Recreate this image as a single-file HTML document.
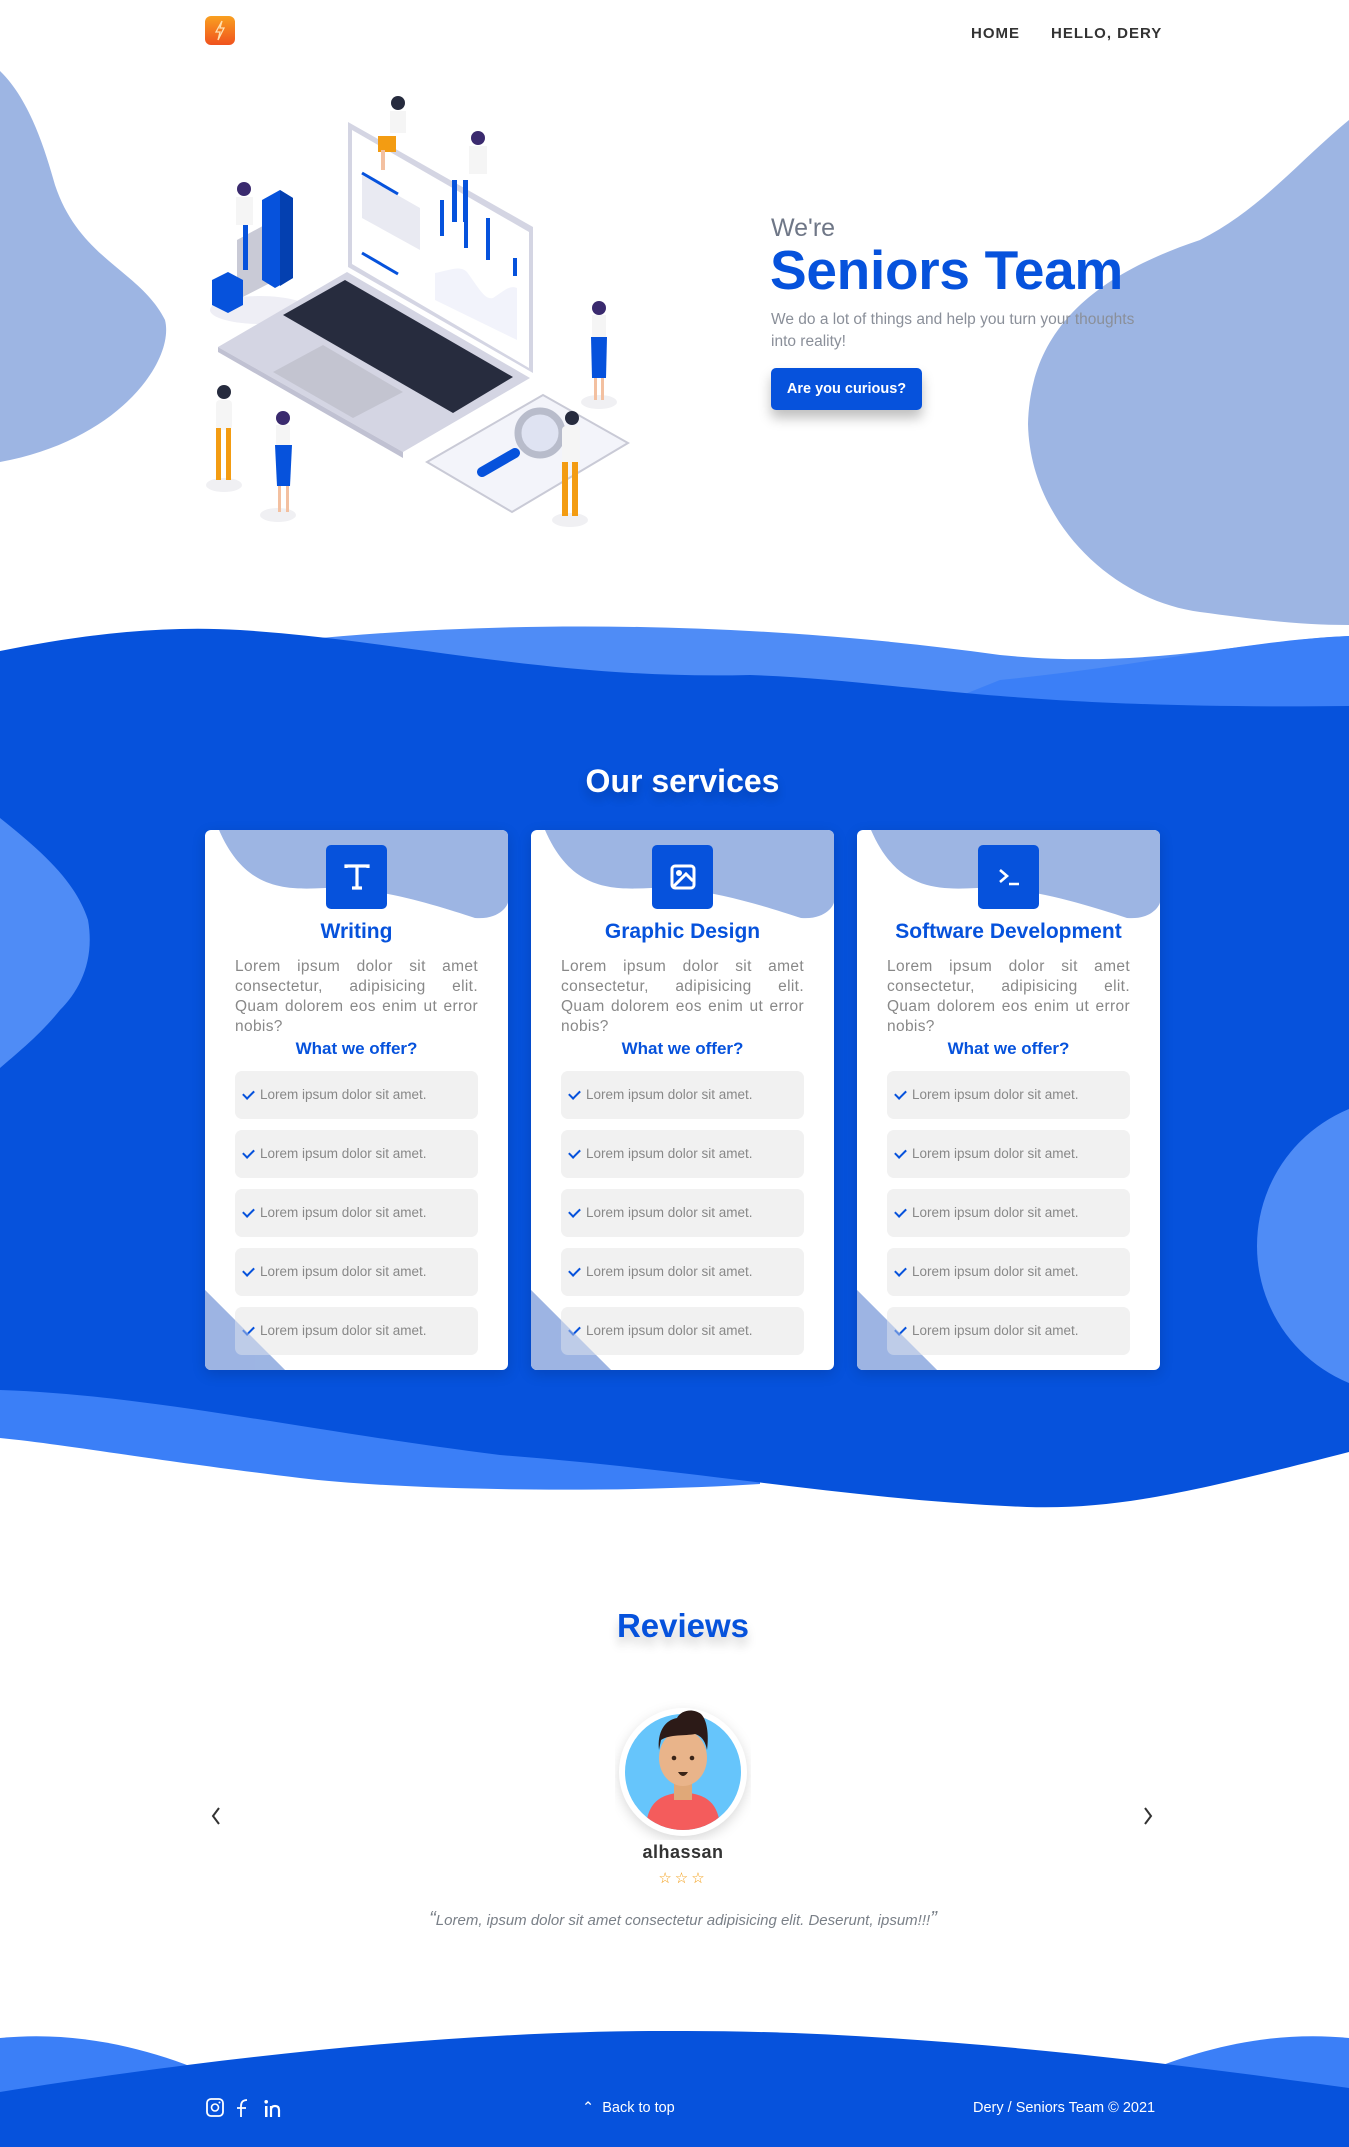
<!DOCTYPE html>
<html><head><meta charset="utf-8">
<style>
*{margin:0;padding:0;box-sizing:border-box}
body{width:1349px;height:2147px;position:relative;overflow:hidden;background:#fff;font-family:"Liberation Sans",sans-serif}
.abs{position:absolute}
.nav{top:25px;font-size:15px;font-weight:bold;color:#333;letter-spacing:1px}
.card{position:absolute;top:830px;width:303px;height:540px;background:#fff;border-radius:6px;overflow:hidden;box-shadow:0 4px 14px rgba(0,0,0,.15)}
.card svg.deco{position:absolute;left:0;top:0}
.ic{position:absolute;left:121px;top:15px;width:61px;height:64px;background:#0652dc;border-radius:5px;display:flex;align-items:center;justify-content:center}
.ct{position:absolute;top:90px;width:100%;text-align:center;color:#0652dc;font-weight:bold;font-size:21px}
.cp{position:absolute;left:30px;top:127px;width:243px;font-size:15.5px;letter-spacing:.35px;line-height:20px;color:#888;text-align:justify}
.co{position:absolute;top:209px;width:100%;text-align:center;color:#0652dc;font-weight:bold;font-size:17px}
.li{position:absolute;left:30px;width:243px;height:48px;background:#f1f1f1;border-radius:7px;font-size:13.5px;color:#888;line-height:48px;padding-left:25px}
.li:before{content:"";position:absolute;left:8px;top:19px;width:9px;height:5px;border-left:2px solid #0652dc;border-bottom:2px solid #0652dc;transform:rotate(-45deg)}
.tri{position:absolute;left:0;bottom:0}
</style></head><body>
<svg class="abs" style="left:0;top:0" width="1349" height="2147" viewBox="0 0 1349 2147">
<path d="M0 71 C30 100 45 150 55 185 C80 260 140 270 165 320 C175 360 120 440 0 462 Z" fill="#9db5e3"/>
<path d="M1349 120 C1300 160 1260 210 1200 240 C1080 280 1030 340 1028 424 C1030 520 1110 600 1200 612 C1260 620 1300 625 1349 625 Z" fill="#9db5e3"/>
<path d="M300 640 C500 620 750 620 1000 655 C1150 670 1250 640 1349 636 L1349 720 L600 720 Z" fill="#4f8cf6"/>
<path d="M1000 680 C1150 665 1250 640 1349 636 L1349 720 L900 720 Z" fill="#3b7ff7"/>
<path d="M0 1380 L760 1380 L760 1484 C600 1494 400 1490 300 1478 C150 1460 70 1445 0 1438 Z" fill="#3b7ff7"/>
<path d="M0 651 C80 635 160 625 240 630 C400 640 550 680 750 675 C900 680 1000 710 1349 706 L1349 1452 C1200 1490 1120 1510 1027 1507 C850 1500 700 1470 500 1455 C300 1430 150 1395 0 1390 Z" fill="#0652dc"/>
<path d="M0 818 C40 850 75 880 88 920 C95 960 80 990 60 1010 C40 1035 15 1055 0 1068 Z" fill="#4f8cf6"/>
<circle cx="1405" cy="1246" r="148" fill="#4f8cf6"/>
<path d="M0 2038 C80 2030 150 2050 200 2070 L0 2100 Z" fill="#3b7ff7"/>
<path d="M1349 2038 C1270 2030 1200 2050 1150 2070 L1349 2100 Z" fill="#3b7ff7"/>
<path d="M0 2092 C200 2060 450 2030 675 2031 C900 2030 1150 2060 1349 2088 L1349 2147 L0 2147 Z" fill="#0652dc"/>
</svg>

<div class="abs" style="left:205px;top:16px;width:30px;height:29px;border-radius:6px;background:linear-gradient(180deg,#f9a020,#f0521e)"></div>
<svg class="abs" style="left:205px;top:16px" width="30" height="29"><path d="M17 5 L11 16 L15 16 L13 24 L19 12 L15 12 Z" fill="none" stroke="#ffe0b0" stroke-width="1.3"/></svg>
<div class="abs nav" style="left:971px">HOME</div>
<div class="abs nav" style="left:1051px">HELLO, DERY</div>

<svg class="abs" style="left:0;top:0" width="700" height="560">
<ellipse cx="260" cy="310" rx="50" ry="14" fill="#eeeef5"/>
<polygon points="237,240 270,222 270,283 237,300" fill="#c9cad6"/>
<polygon points="262,200 280,190 293,198 293,278 275,288 262,280" fill="#0652dc"/>
<polygon points="280,190 293,198 293,278 280,286" fill="#0440b0"/>
<polygon points="212,280 228,272 243,280 243,305 228,313 212,305" fill="#0652dc"/>
<polygon points="218,347 347,272 530,378 403,452" fill="#d4d5e3"/>
<polygon points="218,347 403,452 403,458 218,352" fill="#c0c1d2"/>
<polygon points="348,122 533,227 533,373 348,267" fill="#d4d5e3"/>
<polygon points="352,130 529,232 529,368 352,264" fill="#fff"/>
<polygon points="283,315 345,280 513,377 453,413" fill="#272c3e"/>
<polygon points="273,372 323,345 403,392 353,418" fill="#c3c4d0"/>
<polygon points="362,175 420,208 420,250 362,218" fill="#e9eaf2"/>
<line x1="362" y1="173" x2="398" y2="194" stroke="#0652dc" stroke-width="3"/>
<line x1="362" y1="253" x2="398" y2="274" stroke="#0652dc" stroke-width="3"/>
<line x1="442" y1="200" x2="442" y2="236" stroke="#0652dc" stroke-width="4"/>
<line x1="466" y1="220" x2="466" y2="248" stroke="#0652dc" stroke-width="4"/>
<line x1="488" y1="218" x2="488" y2="260" stroke="#0652dc" stroke-width="4"/>
<line x1="515" y1="258" x2="515" y2="276" stroke="#0652dc" stroke-width="4"/>
<path d="M435 273 C450 270 460 265 467 272 C480 290 485 300 493 298 C505 290 510 285 517 288 L517 340 L435 300 Z" fill="#f2f3fb"/>
<polygon points="427,462 543,395 628,443 512,512" fill="#f3f4fa" stroke="#c9cad6" stroke-width="2"/>
<circle cx="540" cy="433" r="22" fill="#dfe3f2" stroke="#b8bccb" stroke-width="7"/>
<line x1="482" y1="472" x2="515" y2="453" stroke="#0652dc" stroke-width="10" stroke-linecap="round"/>
<g fill="#f0f0f3"><ellipse cx="224" cy="485" rx="18" ry="7"/><ellipse cx="278" cy="515" rx="18" ry="7"/><ellipse cx="599" cy="402" rx="18" ry="7"/><ellipse cx="570" cy="520" rx="18" ry="7"/></g>
<g><circle cx="224" cy="392" r="7" fill="#262b3e"/><rect x="216" y="400" width="16" height="30" rx="4" fill="#f5f5f5"/><rect x="216" y="428" width="5" height="52" fill="#f39c12"/><rect x="226" y="428" width="5" height="52" fill="#f39c12"/></g>
<g><circle cx="283" cy="418" r="7" fill="#3a2a6e"/><rect x="276" y="425" width="14" height="20" fill="#f5f5f5"/><path d="M275 445 L292 445 L290 486 L277 486 Z" fill="#0652dc"/><rect x="278" y="486" width="3" height="26" fill="#f3c0a0"/><rect x="286" y="486" width="3" height="26" fill="#f3c0a0"/></g>
<g><circle cx="599" cy="308" r="7" fill="#3a2a6e"/><rect x="592" y="315" width="14" height="22" fill="#f5f5f5"/><path d="M591 337 L607 337 L606 378 L592 378 Z" fill="#0652dc"/><rect x="594" y="378" width="3" height="22" fill="#f3c0a0"/><rect x="601" y="378" width="3" height="22" fill="#f3c0a0"/></g>
<g><circle cx="572" cy="418" r="7" fill="#262b3e"/><rect x="562" y="426" width="18" height="40" rx="4" fill="#f5f5f5"/><rect x="562" y="462" width="6" height="54" fill="#f39c12"/><rect x="572" y="462" width="6" height="54" fill="#f39c12"/></g>
<g><circle cx="398" cy="103" r="7" fill="#262b3e"/><rect x="390" y="111" width="16" height="22" fill="#f5f5f5"/><rect x="378" y="136" width="18" height="16" fill="#f39c12"/><rect x="381" y="150" width="4" height="20" fill="#f3c0a0"/></g>
<g><circle cx="478" cy="138" r="7" fill="#3a2a6e"/><rect x="469" y="146" width="18" height="28" fill="#f5f5f5"/><rect x="452" y="180" width="5" height="42" fill="#0652dc"/><rect x="463" y="180" width="5" height="42" fill="#0652dc"/></g>
<g><circle cx="244" cy="189" r="7" fill="#3a2a6e"/><rect x="236" y="197" width="17" height="28" fill="#f5f5f5"/><rect x="243" y="225" width="5" height="45" fill="#0652dc"/></g>
</svg>

<div class="abs" style="left:771px;top:214px;font-size:25px;color:#6f7787">We're</div>
<div class="abs" style="left:770px;top:238px;font-size:55px;font-weight:bold;color:#0652dc;letter-spacing:-0.3px">Seniors Team</div>
<div class="abs" style="left:771px;top:309px;width:385px;font-size:15.5px;line-height:22px;color:#8a8f99">We do a lot of things and help you turn your thoughts into reality!</div>
<div class="abs" style="left:771px;top:368px;width:151px;height:42px;background:#0652dc;border-radius:5px;color:#fff;font-size:14.5px;font-weight:bold;text-align:center;line-height:42px;box-shadow:0 8px 12px rgba(0,0,0,.25)">Are you curious?</div>

<div class="abs" style="left:0;top:763px;width:1365px;text-align:center;color:#fff;font-size:32px;font-weight:bold;text-shadow:0 6px 10px rgba(0,0,0,.2)">Our services</div>

<div class="card" style="left:205px">
<svg class="deco" width="303" height="540"><path d="M14 0 C40 60 80 60 120 58 C170 56 230 75 270 88 C295 90 303 75 303 72 L303 0 Z" fill="#9db5e3"/><path d="M0 460 L80 540 L0 540 Z" fill="#9db5e3"/></svg>
<div class="ic"><svg width="30" height="30" viewBox="0 0 30 30"><path d="M4 6 V4 H26 V6 M15 4 V26 M10 26 H20" fill="none" stroke="#fff" stroke-width="3.2"/></svg></div>
<div class="ct">Writing</div>
<div class="cp">Lorem ipsum dolor sit amet consectetur, adipisicing elit. Quam dolorem eos enim ut error nobis?</div>
<div class="co">What we offer?</div>
<div class="li" style="top:241px">Lorem ipsum dolor sit amet.</div>
<div class="li" style="top:300px">Lorem ipsum dolor sit amet.</div>
<div class="li" style="top:359px">Lorem ipsum dolor sit amet.</div>
<div class="li" style="top:418px">Lorem ipsum dolor sit amet.</div>
<div class="li" style="top:477px">Lorem ipsum dolor sit amet.</div>
<svg class="tri" width="80" height="80" style="opacity:.6"><path d="M0 0 L80 80 L0 80 Z" fill="#9db5e3"/></svg>
</div>
<div class="card" style="left:531px">
<svg class="deco" width="303" height="540"><path d="M14 0 C40 60 80 60 120 58 C170 56 230 75 270 88 C295 90 303 75 303 72 L303 0 Z" fill="#9db5e3"/><path d="M0 460 L80 540 L0 540 Z" fill="#9db5e3"/></svg>
<div class="ic"><svg width="30" height="30" viewBox="0 0 30 30"><rect x="4" y="4" width="22" height="22" rx="3" fill="none" stroke="#fff" stroke-width="3"/><circle cx="11" cy="11" r="3" fill="#fff"/><path d="M5 25 L18 12 L25 19" fill="none" stroke="#fff" stroke-width="3"/></svg></div>
<div class="ct">Graphic Design</div>
<div class="cp">Lorem ipsum dolor sit amet consectetur, adipisicing elit. Quam dolorem eos enim ut error nobis?</div>
<div class="co">What we offer?</div>
<div class="li" style="top:241px">Lorem ipsum dolor sit amet.</div>
<div class="li" style="top:300px">Lorem ipsum dolor sit amet.</div>
<div class="li" style="top:359px">Lorem ipsum dolor sit amet.</div>
<div class="li" style="top:418px">Lorem ipsum dolor sit amet.</div>
<div class="li" style="top:477px">Lorem ipsum dolor sit amet.</div>
<svg class="tri" width="80" height="80" style="opacity:.6"><path d="M0 0 L80 80 L0 80 Z" fill="#9db5e3"/></svg>
</div>
<div class="card" style="left:857px">
<svg class="deco" width="303" height="540"><path d="M14 0 C40 60 80 60 120 58 C170 56 230 75 270 88 C295 90 303 75 303 72 L303 0 Z" fill="#9db5e3"/><path d="M0 460 L80 540 L0 540 Z" fill="#9db5e3"/></svg>
<div class="ic"><svg width="30" height="30" viewBox="0 0 30 30"><path d="M6 8 L13 14 L6 20 M15 22 H25" fill="none" stroke="#fff" stroke-width="2.6"/></svg></div>
<div class="ct">Software Development</div>
<div class="cp">Lorem ipsum dolor sit amet consectetur, adipisicing elit. Quam dolorem eos enim ut error nobis?</div>
<div class="co">What we offer?</div>
<div class="li" style="top:241px">Lorem ipsum dolor sit amet.</div>
<div class="li" style="top:300px">Lorem ipsum dolor sit amet.</div>
<div class="li" style="top:359px">Lorem ipsum dolor sit amet.</div>
<div class="li" style="top:418px">Lorem ipsum dolor sit amet.</div>
<div class="li" style="top:477px">Lorem ipsum dolor sit amet.</div>
<svg class="tri" width="80" height="80" style="opacity:.6"><path d="M0 0 L80 80 L0 80 Z" fill="#9db5e3"/></svg>
</div>

<div class="abs" style="left:0;top:1607px;width:1366px;text-align:center;color:#0652dc;font-size:33px;font-weight:bold;text-shadow:0 8px 10px rgba(0,0,0,.18)">Reviews</div>
<svg class="abs" style="left:615px;top:1700px" width="136" height="140">
<defs><clipPath id="cc"><circle cx="68" cy="72" r="58"/></clipPath></defs>
<circle cx="68" cy="72" r="64" fill="#fff" style="filter:drop-shadow(0 4px 6px rgba(0,0,0,.15))"/>
<circle cx="68" cy="72" r="58" fill="#66c5fb"/>
<g clip-path="url(#cc)">
<path d="M30 140 C30 100 45 95 68 92 C91 95 106 100 106 140 Z" fill="#f45c5c"/>
<rect x="59" y="80" width="18" height="20" fill="#e0a878"/>
</g>
<ellipse cx="68" cy="58" rx="24" ry="28" fill="#e9b48a"/>
<path d="M44 50 C42 32 50 20 62 18 C66 10 78 8 86 14 C92 20 94 34 92 50 C90 40 86 36 80 34 C70 36 55 34 46 40 Z" fill="#2c1a17"/>
<circle cx="59" cy="58" r="2.3" fill="#3a2417"/><circle cx="77" cy="58" r="2.3" fill="#3a2417"/>
<path d="M63 72 Q68 80 73 72 Z" fill="#3a2417"/>
</svg>
<div class="abs" style="left:0;top:1842px;width:1366px;text-align:center;font-size:18px;color:#333;font-weight:bold;letter-spacing:.5px">alhassan</div>
<div class="abs" style="left:0;top:1869px;width:1366px;text-align:center;font-size:15px;color:#f39c12;letter-spacing:3px">☆☆☆</div>
<div class="abs" style="left:0;top:1908px;width:1366px;text-align:center;font-size:15px;color:#7a8088;font-style:italic"><span style="font-size:20px">“</span>Lorem, ipsum dolor sit amet consectetur adipisicing elit. Deserunt, ipsum!!!<span style="font-size:20px">”</span></div>
<svg class="abs" style="left:210px;top:1806px" width="12" height="20"><path d="M9 2 L3 10 L9 18" fill="none" stroke="#333" stroke-width="2"/></svg>
<svg class="abs" style="left:1142px;top:1806px" width="12" height="20"><path d="M3 2 L9 10 L3 18" fill="none" stroke="#333" stroke-width="2"/></svg>

<svg class="abs" style="left:205px;top:2097px" width="80" height="22">
<rect x="2" y="2" width="16" height="17" rx="4" fill="none" stroke="#fff" stroke-width="1.8"/><circle cx="10" cy="10.5" r="3.5" fill="none" stroke="#fff" stroke-width="1.6"/><circle cx="14.5" cy="5.5" r="1" fill="#fff"/>
<path d="M36 20 V9 Q36 3 42 3 M32 11 H41" fill="none" stroke="#fff" stroke-width="1.8"/>
<rect x="60" y="9" width="2.5" height="11" fill="#fff"/><circle cx="61.2" cy="4.8" r="1.8" fill="#fff"/><path d="M66 20 V9 M66 13 Q66 9 70 9 Q74 9 74 13 V20" fill="none" stroke="#fff" stroke-width="2.2"/>
</svg>
<div class="abs" style="left:582px;top:2100px;font-size:14.5px;color:#fff">&#8963;&nbsp; Back to top</div>
<div class="abs" style="left:973px;top:2100px;font-size:14.5px;color:#fff">Dery / Seniors Team © 2021</div>
</body></html>
